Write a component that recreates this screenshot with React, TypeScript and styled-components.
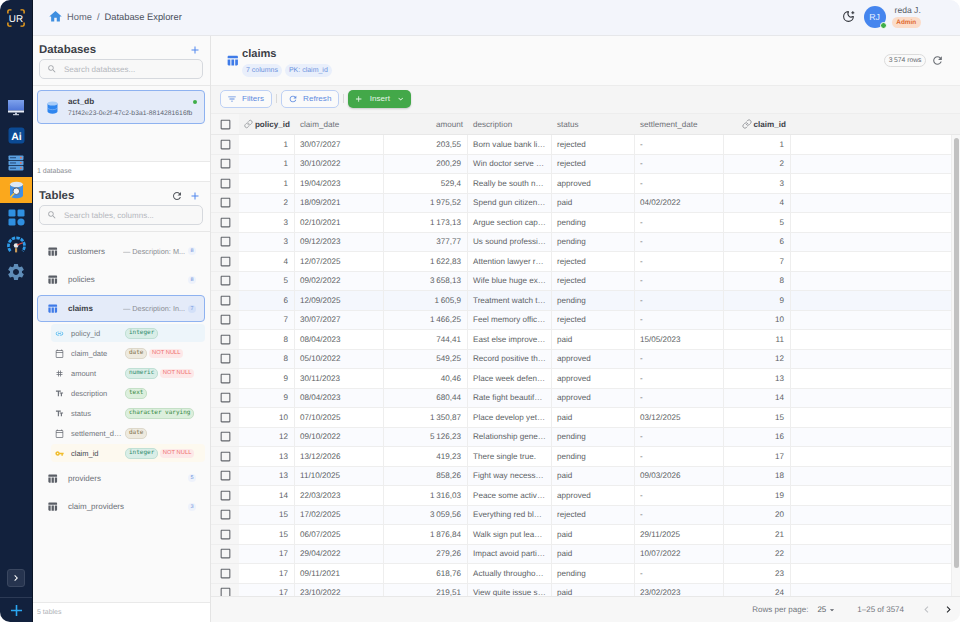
import React from "react";
import styled, { createGlobalStyle } from "styled-components";
import {
  MdHome, MdAdd, MdSearch, MdTableChart, MdRefresh, MdFilterList, MdKeyboardArrowDown,
  MdCheckBoxOutlineBlank, MdChevronLeft, MdChevronRight, MdArrowDropDown, MdLink, MdTag,
  MdTextFields, MdOutlineCalendarToday, MdVpnKey, MdSettings,
} from "react-icons/md";
import { Link as ChainIcon, MoonStar } from "lucide-react";

const Global = createGlobalStyle`
  html, body { margin: 0; padding: 0; background: #fff; }
  body { font-family: "Liberation Sans", Arial, sans-serif; text-rendering: geometricPrecision; }
  * { box-sizing: border-box; }
`;

const App_ = styled.div`
  width: 960px; height: 622px; display: flex; overflow: hidden; border-radius: 10px; background: #fafafa;
`;
const Rail = styled.nav`
  width: 33px; flex: none; background: #12213d; border-right: 1px solid #0b1526;
  display: flex; flex-direction: column; align-items: center; padding-top: 9px;
`;
const Logo = styled.div`width: 18px; height: 18px; display: flex;`;
const RailNav = styled.div`
  margin-top: 67.3px; width: 100%; display: flex; flex-direction: column; align-items: stretch;
`;
const RailItem = styled.div<{ $active?: boolean }>`
  height: ${p => (p.$active ? "25.4px" : "27.4px")}; margin: ${p => (p.$active ? "1px 0" : "0")};
  display: flex; align-items: center; justify-content: center;
  background: ${p => (p.$active ? "#fba81c" : "transparent")};
`;
const RailSpacer = styled.div`flex: 1;`;
const Expand = styled.div`
  width: 18px; height: 18px; border: 1px solid #3a4760; background: #26344f; border-radius: 3px; color: #fff;
  display: flex; align-items: center; justify-content: center; font-size: 12px; margin-bottom: 10px;
`;
const RailPlus = styled.div`
  width: 100%; height: 25px; border-top: 1px solid #2c3a55; display: flex; align-items: center; justify-content: center;
  color: #2ba7f2; font-size: 19px;
`;
const Column = styled.div`flex: 1; min-width: 0; display: flex; flex-direction: column;`;
const TopBar = styled.header`
  height: 36px; flex: none; background: #f3f5fb; border-bottom: 1px solid #e6e7ea;
  display: flex; align-items: center; padding: 0 39px 2px 15px;
`;
const Crumbs = styled.div`
  display: flex; align-items: center; font-size: 9.33px; color: #5f6673; flex: 1;
  svg { color: #3f8fe0; font-size: 15px; margin-right: 4px; }
`;
const CrumbSep = styled.span`margin: 0 5px;`;
const CrumbNow = styled.span`color: #4a505c;`;
const Moon = styled.div`color: #33363d; display: flex; margin-right: 9px;`;
const Avatar = styled.div`
  width: 22px; height: 22px; border-radius: 50%; background: #4585ee; color: #e7efff; font-size: 8.8px; position: relative;
  display: flex; align-items: center; justify-content: center; margin-right: 6px;
`;
const AvatarDot = styled.span`
  position: absolute; right: -1px; bottom: -1px; width: 7px; height: 7px; border-radius: 50%;
  background: #3fae49; border: 1px solid #fff;
`;
const UserBox = styled.div`display: flex; flex-direction: column; align-items: flex-start; gap: 2px;`;
const UserName = styled.div`font-size: 8.6px; color: #565c66; line-height: 10px; margin-left: 3px;`;
const RoleBadge = styled.div`
  font-size: 6.4px; font-weight: 700; color: #df6a30; background: #fbdcc9; border-radius: 6px; padding: 0 4.8px; line-height: 11px;
`;
const Work = styled.div`flex: 1; min-height: 0; display: flex;`;
const Side = styled.aside`
  width: 178px; flex: none; background: #fafafa; border-right: 1px solid #e4e4e4; display: flex; flex-direction: column;
`;
const DbSection = styled.section`height: 126px; flex: none; border-bottom: 1px solid #e9e9e9; display: flex; flex-direction: column;`;
const SideHead = styled.div`
  display: flex; align-items: center; gap: 6px; padding: 4px 9px 0 6px; height: 23px; flex: none;
`;
const SideTitle = styled.h2`flex: 1; margin: 0; font-size: 11.4px; font-weight: 700; color: #3c3f47;`;
const HeadIcon = styled.span<{ $blue?: boolean }>`
  display: flex; font-size: 12px; color: ${p => (p.$blue ? "#4f86ee" : "#55595f")};
`;
const Search = styled.div`
  margin: 0 7px 0 6px; height: 20px; flex: none; border: 1px solid #d6d9de; border-radius: 5px; background: #f8f8f8;
  display: flex; align-items: center; gap: 7px; padding: 0 7px; font-size: 8px; color: #b4b7bd;
  svg { font-size: 10px; color: #a3a6ab; }
`;
const Rule = styled.div`height: 1px; background: #e7e7e7; margin-top: 6px; flex: none;`;
const DbCard = styled.div`
  margin: 4px 5px 0 4px; height: 34px; background: #e4ebf9; border: 1px solid #8eb2f0; border-radius: 4px;
  display: flex; align-items: center; padding: 0 7px 0 9px; gap: 10px;
`;
const DbText = styled.div`flex: 1; min-width: 0; display: flex; flex-direction: column; gap: 4px;`;
const DbTop = styled.div`display: flex; align-items: center; justify-content: space-between;`;
const DbName = styled.span`font-size: 8.1px; font-weight: 700; color: #3c3f47;`;
const DbDot = styled.span`width: 4px; height: 4px; border-radius: 50%; background: #3fae49;`;
const DbId = styled.div`font-size: 6.7px; color: #5c6470; white-space: nowrap; letter-spacing: .01em;`;
const SideFoot = styled.div<{ $muted?: boolean }>`
  height: 20px; flex: none; background: #fff; padding: 0 4px; display: flex; align-items: center;
  font-size: 7px; color: ${p => (p.$muted ? "#b0b3b8" : "#8b8e94")}; border-bottom: 1px solid #e9e9e9;
`;
const SideFootEnd = styled(SideFoot)`border-bottom: 0; border-top: 1px solid #e9e9e9;`;
const TablesSection = styled.section`flex: 1; min-height: 0; display: flex; flex-direction: column;`;
const TableList = styled.div`flex: 1; padding: 5px 5px 0 4px; display: flex; flex-direction: column;`;
const TableRow = styled.div<{ $active?: boolean }>`
  height: ${p => (p.$active ? "27px" : "28.5px")}; flex: none; display: flex; align-items: center; padding: 0 8px 0 9px;
  border-radius: 4px; border: 1px solid ${p => (p.$active ? "#8eb2f0" : "transparent")};
  background: ${p => (p.$active ? "#e4ebf9" : "transparent")};
  svg { font-size: 11px; color: ${p => (p.$active ? "#3f7be8" : "#5a5e66")}; flex: none; }
  margin-top: ${p => (p.$active ? "1px" : "0")};
`;
const TableName = styled.span<{ $active?: boolean }>`
  margin-left: 10px; width: 55px; font-size: 8px; white-space: nowrap;
  font-weight: ${p => (p.$active ? 700 : 400)}; color: ${p => (p.$active ? "#3c3f47" : "#6a6e76")};
`;
const TableDesc = styled.span`
  flex: 1; width: 0; font-size: 7.3px; color: #8b8e94; white-space: nowrap; overflow: hidden;
`;
const Count = styled.span<{ $active?: boolean }>`
  flex: none; margin-left: auto; width: 8px; height: 8px; border-radius: 50%; font-size: 5.5px;
  color: #6c92dd; background: ${p => (p.$active ? "#d3e0f8" : "#eef2fb")};
  display: flex; align-items: center; justify-content: center;
`;
const ColumnsList = styled.div`margin: 2px 0 2px 14px; display: flex; flex-direction: column; gap: 2px;`;
const ColumnRow = styled.div<{ $tone?: string }>`
  height: 18px; flex: none; display: flex; align-items: center; border-radius: 4px; padding-left: 4px;
  background: ${p => p.$tone || "transparent"};
`;
const ColIcon = styled.span<{ $color?: string }>`
  width: 9px; display: flex; font-size: 9px; color: ${p => p.$color || "#6a6e76"}; margin-right: 7px; flex: none;
`;
const ColName = styled.span<{ $strong?: boolean }>`
  width: 54px; flex: none; padding-right: 3px; font-size: 7.5px; white-space: nowrap; overflow: hidden; text-overflow: ellipsis;
  color: ${p => (p.$strong ? "#45484f" : "#71757c")}; font-weight: 400;
`;
const TypeTag = styled.span<{ $kind: "green" | "brown" | "teal" }>`
  font-family: "DejaVu Sans Mono", "Liberation Mono", monospace; font-size: 6px; line-height: 8px; padding: 0.5px 3px; border-radius: 5px;
  border: 1px solid ${p => ({ green: "#c5e0c7", brown: "#ddd8ca", teal: "#c0e0d5" }[p.$kind])};
  background: ${p => ({ green: "#dcefdd", brown: "#eeeadf", teal: "#d9eee7" }[p.$kind])};
  color: ${p => ({ green: "#35883e", brown: "#80704c", teal: "#2f8a6b" }[p.$kind])};
`;
const NullTag = styled.span`
  margin-left: 2px; font-size: 5.8px; line-height: 9px; padding: 0 2.5px; border-radius: 4px; color: #ef6f6f; background: #fde8e8;
`;
const Main = styled.main`flex: 1; min-width: 0; background: #fafafa; display: flex; flex-direction: column;`;
const MainHead = styled.div`
  height: 50px; flex: none; display: flex; align-items: center; padding: 0 16px 0 15px; border-bottom: 1px solid #ececec;
`;
const MainIcon = styled.span`display: flex; font-size: 13px; color: #3f7be8; margin: 0 3px 0 0;`;
const TitleBox = styled.div`flex: 1; display: flex; flex-direction: column; gap: 3px; margin-top: 3px;`;
const MainTitle = styled.h1`margin: 0; font-size: 11.1px; line-height: 14px; font-weight: 700; color: #3c3f47;`;
const Chips = styled.div`display: flex; gap: 3px;`;
const Chip = styled.span`
  font-size: 7px; line-height: 13.5px; padding: 0 4px; border-radius: 7px; background: #e9effb; color: #6c92dd;
`;
const RowsPill = styled.span`
  font-size: 6.8px; line-height: 11px; padding: 0 3.5px; border: 1px solid #dcdcdc; border-radius: 7px; color: #676b72; margin-right: 5px;
`;
const HeadRefresh = styled.span`display: flex; font-size: 13px; color: #6a6e74;`;
const Toolbar = styled.div`
  height: 28px; flex: none; display: flex; align-items: center; gap: 4px; padding: 0 0 2px 9px; background: #f5f5f5; border-bottom: 1px solid #ededed;
`;
const OutlineButton = styled.button`
  height: 18px; border: 1px solid #bdd0f4; border-radius: 5px; background: #fafafa; color: #5e8be0; font: 400 8.1px "Liberation Sans", sans-serif;
  padding: 0 7px 0 6px; display: flex; align-items: center; gap: 5px;
  svg { font-size: 10px; }
`;
const Sep = styled.span`width: 1px; height: 9px; background: #d9d9d9;`;
const InsertButton = styled.button`
  height: 18px; width: 63px; border: 0; border-radius: 5px; background: #43a849; color: #e8f6e9; font: 400 8.1px "Liberation Sans", sans-serif;
  display: flex; align-items: center; justify-content: center; gap: 6px; box-shadow: 0 1px 2px rgba(0,0,0,.18);
  svg { font-size: 10px; }
`;
const grid = "28px 56px 89px 84px 84px 83px 89px 67px 1fr";
const HeadRow = styled.div`
  height: 21px; flex: none; display: grid; grid-template-columns: ${grid}; background: #f3f3f3; border-bottom: 1px solid #e8e8e8;
`;
const Th = styled.div<{ $right?: boolean; $strong?: boolean }>`
  display: flex; align-items: center; justify-content: ${p => (p.$right ? "flex-end" : "flex-start")}; gap: 2px; padding: 0 5px 0 5px;
  font-size: 8.1px; white-space: nowrap; color: ${p => (p.$strong ? "#3c3f47" : "#6d7077")}; font-weight: ${p => (p.$strong ? 700 : 400)};
  svg { color: #8a8d92; }
`;
const CheckCell = styled.div`
  display: flex; align-items: center; justify-content: center; color: #62656b; font-size: 13px; background: #f6f6f6;
`;
const BodyWrap = styled.div`flex: 1; min-height: 0; display: flex; overflow: hidden;`;
const Rows = styled.div`flex: 1; min-width: 0;`;
const Row = styled.div<{ $alt?: boolean; $hover?: boolean }>`
  height: 19.5px; display: grid; grid-template-columns: ${grid}; border-bottom: 1px solid #eeeeee;
  background: ${p => (p.$hover ? "#f4f7fd" : p.$alt ? "#fafbfe" : "#fff")};
`;
const Td = styled.div<{ $right?: boolean }>`
  display: flex; align-items: center; justify-content: ${p => (p.$right ? "flex-end" : "flex-start")}; padding: 0 6px 0 5px; font-size: 8.1px;
  color: #5c5f65; white-space: nowrap; overflow: hidden; border-right: 1px solid #eeeeee;
`;
const TrackBar = styled.div`width: 8px; flex: none; padding: 3px 1px 0 2px; background: #f7f7f7;`;
const Thumb = styled.div`height: 430px; background: #c1c1c1; border-radius: 3px;`;
const Pager = styled.footer`
  height: 26px; flex: none; display: flex; align-items: center; justify-content: flex-end; padding: 0 5.5px 0 0;
  background: #f7f7f7; border-top: 1px solid #e8e8e8; font-size: 8px; color: #71757c;
`;
const PerPage = styled.span`margin-left: 9px; display: flex; align-items: center; gap: 1px; color: #5a5e66; svg { font-size: 10px; }`;
const Range = styled.span`margin-left: 20px; margin-right: 6.5px;`;
const PageBtn = styled.span<{ $off?: boolean }>`
  display: flex; font-size: 13px; margin-left: 9px; color: ${p => (p.$off ? "#c0c2c6" : "#26282c")};
`;

const Monitor = () => (
  <svg width="18" height="17" viewBox="0 0 18 17">
    <defs><linearGradient id="mon" x1="0" y1="0" x2="0" y2="1"><stop offset="0" stopColor="#7ea2ec"/><stop offset="1" stopColor="#4f76d8"/></linearGradient></defs>
    <rect x="1" y="1" width="16" height="10.5" fill="url(#mon)"/>
    <rect x="1" y="11.5" width="16" height="2" fill="#e8edf6"/>
    <rect x="8" y="13.5" width="2" height="2" fill="#b9c4da"/>
    <rect x="6" y="15.2" width="6" height="1" fill="#dfe5ef"/>
  </svg>
);
const AiIcon = () => (
  <svg width="17" height="17" viewBox="0 0 17 17">
    <rect x="0.5" y="0.5" width="16" height="16" rx="3" fill="#0b4a94"/>
    <text x="8.5" y="12.5" fontFamily="Liberation Sans, sans-serif" fontSize="10.5" fontWeight="700" fill="#fff" textAnchor="middle">Ai</text>
  </svg>
);
const ServerIcon = () => (
  <svg width="16" height="16" viewBox="0 0 16 16">
    {[0.5, 5.7, 10.9].map(y => (
      <g key={y}>
        <rect x="0.5" y={y} width="15" height="4.5" rx="0.8" fill="#5a9fe0"/>
        <rect x="2" y={y + 1.8} width="6" height="0.9" fill="#1d3f6e"/>
        <circle cx="12.8" cy={y + 2.2} r="0.9" fill="#ef6a4a"/>
      </g>
    ))}
  </svg>
);
const DbSearchIcon = () => (
  <svg width="17" height="19" viewBox="0 0 17 19">
    <ellipse cx="8.5" cy="3.6" rx="6.5" ry="2.8" fill="#dbe8f6"/>
    <path d="M2 3.6V14.5C2 16 5 17.3 8.5 17.3S15 16 15 14.5V3.6C15 5 12 6.4 8.5 6.4S2 5 2 3.6Z" fill="#3f8fe6"/>
    <circle cx="8.3" cy="10.2" r="3.3" fill="#eef3f8" stroke="#5a6270" strokeWidth="1"/>
    <path d="M5.8 12.8L3 15.6" stroke="#f5c542" strokeWidth="1.6" strokeLinecap="round"/>
  </svg>
);
const GridIcon = () => (
  <svg width="17" height="17" viewBox="0 0 17 17" fill="#2f8fe0">
    <rect x="0.5" y="0.5" width="7" height="7" rx="1.3"/>
    <rect x="9.5" y="0.5" width="7" height="7" rx="1.3"/>
    <rect x="0.5" y="9.5" width="7" height="7" rx="1.3"/>
    <circle cx="13" cy="13" r="3.6"/>
  </svg>
);
const GaugeIcon = () => (
  <svg width="19" height="18" viewBox="0 0 18 17" fill="none">
    <path d="M3.2 14.2A7.6 7.6 0 1 1 14.8 14.2" stroke="#2f9be8" strokeWidth="2.6" strokeDasharray="3.2 1"/>
    <circle cx="8.6" cy="9" r="2.2" fill="#e6e8ea"/>
    <path d="M9.5 8.6L15 6.4" stroke="#e4493e" strokeWidth="1"/>
    <rect x="7.6" y="11.5" width="2" height="4" fill="#c99a58"/>
  </svg>
);
const DbIcon = () => (
  <svg width="11" height="13" viewBox="0 0 11 13">
    <path d="M0.5 2.5V10.5C0.5 11.7 2.7 12.7 5.5 12.7S10.5 11.7 10.5 10.5V2.5Z" fill="#2f86ef"/>
    <path d="M0.5 6.5C0.5 7.7 2.7 8.7 5.5 8.7S10.5 7.7 10.5 6.5" stroke="#a8cbf6" strokeWidth="0.5" fill="none"/>
    <ellipse cx="5.5" cy="2.5" rx="5" ry="2.1" fill="#a9cdf8"/>
  </svg>
);
const LogoMark = () => (
  <svg width="18" height="18" viewBox="0 0 20 20" fill="none">
    <g stroke="#f2a21b" strokeWidth="1.6">
      <path d="M5 1H2.5A1.5 1.5 0 0 0 1 2.5V5"/>
      <path d="M15 1H17.5A1.5 1.5 0 0 1 19 2.5V5"/>
      <path d="M5 19H2.5A1.5 1.5 0 0 1 1 17.5V15"/>
      <path d="M15 19H17.5A1.5 1.5 0 0 0 19 17.5V15"/>
    </g>
    <text x="10" y="14" fontFamily="Liberation Sans, sans-serif" fontSize="11" fontWeight="400" fill="#fff" textAnchor="middle">UR</text>
  </svg>
);

const nb = "\u202f";
const data: [number, string, string, string, string, string, number][] = [
  [1, "30/07/2027", "203,55", "Born value bank li…", "rejected", "-", 1],
  [1, "30/10/2022", "200,29", "Win doctor serve …", "rejected", "-", 2],
  [1, "19/04/2023", "529,4", "Really be south n…", "approved", "-", 3],
  [2, "18/09/2021", `1${nb}975,52`, "Spend gun citizen…", "paid", "04/02/2022", 4],
  [3, "02/10/2021", `1${nb}173,13`, "Argue section cap…", "pending", "-", 5],
  [3, "09/12/2023", "377,77", "Us sound professi…", "pending", "-", 6],
  [4, "12/07/2025", `1${nb}622,83`, "Attention lawyer r…", "rejected", "-", 7],
  [5, "09/02/2022", `3${nb}658,13`, "Wife blue huge ex…", "rejected", "-", 8],
  [6, "12/09/2025", `1${nb}605,9`, "Treatment watch t…", "pending", "-", 9],
  [7, "30/07/2027", `1${nb}466,25`, "Feel memory offic…", "rejected", "-", 10],
  [8, "08/04/2023", "744,41", "East else improve…", "paid", "15/05/2023", 11],
  [8, "05/10/2022", "549,25", "Record positive th…", "approved", "-", 12],
  [9, "30/11/2023", "40,46", "Place week defen…", "approved", "-", 13],
  [9, "08/04/2023", "680,44", "Rate fight beautif…", "approved", "-", 14],
  [10, "07/10/2025", `1${nb}350,87`, "Place develop yet…", "paid", "03/12/2025", 15],
  [12, "09/10/2022", `5${nb}126,23`, "Relationship gene…", "pending", "-", 16],
  [13, "13/12/2026", "419,23", "There single true.", "pending", "-", 17],
  [13, "11/10/2025", "858,26", "Fight way necess…", "paid", "09/03/2026", 18],
  [14, "22/03/2023", `1${nb}316,03`, "Peace some activ…", "approved", "-", 19],
  [15, "17/02/2025", `3${nb}059,56`, "Everything red bl…", "rejected", "-", 20],
  [15, "06/07/2025", `1${nb}876,84`, "Walk sign put lea…", "paid", "29/11/2025", 21],
  [17, "29/04/2022", "279,26", "Impact avoid parti…", "paid", "10/07/2022", 22],
  [17, "09/11/2021", "618,76", "Actually througho…", "pending", "-", 23],
  [17, "23/10/2022", "219,51", "View quite issue s…", "paid", "23/02/2023", 24],
];

type ColDef = { name: string; icon: React.ReactNode; iconColor?: string; type: string; kind: "green" | "brown" | "teal"; notNull?: boolean; tone?: string; strong?: boolean };
const cols: ColDef[] = [
  { name: "policy_id", icon: <MdLink />, iconColor: "#45b4ee", type: "integer", kind: "teal", tone: "#edf5fa" },
  { name: "claim_date", icon: <MdOutlineCalendarToday />, type: "date", kind: "brown", notNull: true },
  { name: "amount", icon: <MdTag />, type: "numeric", kind: "teal", notNull: true },
  { name: "description", icon: <MdTextFields />, type: "text", kind: "green" },
  { name: "status", icon: <MdTextFields />, type: "character varying", kind: "green" },
  { name: "settlement_date", icon: <MdOutlineCalendarToday />, type: "date", kind: "brown" },
  { name: "claim_id", icon: <MdVpnKey />, iconColor: "#f0bd2e", type: "integer", kind: "teal", notNull: true, tone: "#fdf9ef", strong: true },
];

export default function App() {
  return (
    <App_>
      <Global />
      <Rail>
        <Logo><LogoMark /></Logo>
        <RailNav>
          <RailItem><Monitor /></RailItem>
          <RailItem><AiIcon /></RailItem>
          <RailItem><ServerIcon /></RailItem>
          <RailItem $active><DbSearchIcon /></RailItem>
          <RailItem><GridIcon /></RailItem>
          <RailItem><GaugeIcon /></RailItem>
          <RailItem><MdSettings size={20} color="#5f8db8" /></RailItem>
        </RailNav>
        <RailSpacer />
        <Expand><MdChevronRight /></Expand>
        <RailPlus><MdAdd /></RailPlus>
      </Rail>
      <Column>
        <TopBar>
          <Crumbs>
            <MdHome />
            <span>Home</span><CrumbSep>/</CrumbSep><CrumbNow>Database Explorer</CrumbNow>
          </Crumbs>
          <Moon><MoonStar size={13} /></Moon>
          <Avatar>RJ<AvatarDot /></Avatar>
          <UserBox>
            <UserName>reda J.</UserName>
            <RoleBadge>Admin</RoleBadge>
          </UserBox>
        </TopBar>
        <Work>
          <Side>
            <DbSection>
              <SideHead>
                <SideTitle>Databases</SideTitle>
                <HeadIcon $blue><MdAdd /></HeadIcon>
              </SideHead>
              <Search><MdSearch />Search databases...</Search>
              <Rule />
              <DbCard>
                <DbIcon />
                <DbText>
                  <DbTop><DbName>act_db</DbName><DbDot /></DbTop>
                  <DbId>71f42e23-0e2f-47c2-b3a1-8814281616fb</DbId>
                </DbText>
              </DbCard>
            </DbSection>
            <SideFoot>1 database</SideFoot>
            <TablesSection>
              <SideHead>
                <SideTitle>Tables</SideTitle>
                <HeadIcon><MdRefresh /></HeadIcon>
                <HeadIcon $blue><MdAdd /></HeadIcon>
              </SideHead>
              <Search><MdSearch />Search tables, columns...</Search>
              <Rule />
              <TableList>
                <TableRow><MdTableChart /><TableName>customers</TableName><TableDesc>— Description: M...</TableDesc><Count>8</Count></TableRow>
                <TableRow><MdTableChart /><TableName>policies</TableName><Count>8</Count></TableRow>
                <TableRow $active><MdTableChart /><TableName $active>claims</TableName><TableDesc>— Description: In...</TableDesc><Count $active>7</Count></TableRow>
                <ColumnsList>
                  {cols.map(c => (
                    <ColumnRow key={c.name} $tone={c.tone}>
                      <ColIcon $color={c.iconColor}>{c.icon}</ColIcon>
                      <ColName $strong={c.strong}>{c.name}</ColName>
                      <TypeTag $kind={c.kind}>{c.type}</TypeTag>
                      {c.notNull && <NullTag>NOT NULL</NullTag>}
                    </ColumnRow>
                  ))}
                </ColumnsList>
                <TableRow><MdTableChart /><TableName>providers</TableName><Count>5</Count></TableRow>
                <TableRow><MdTableChart /><TableName>claim_providers</TableName><Count>3</Count></TableRow>
              </TableList>
              <SideFootEnd $muted>5 tables</SideFootEnd>
            </TablesSection>
          </Side>
          <Main>
            <MainHead>
              <MainIcon><MdTableChart /></MainIcon>
              <TitleBox>
                <MainTitle>claims</MainTitle>
                <Chips><Chip>7 columns</Chip><Chip>PK: claim_id</Chip></Chips>
              </TitleBox>
              <RowsPill>3{nb}574 rows</RowsPill>
              <HeadRefresh><MdRefresh /></HeadRefresh>
            </MainHead>
            <Toolbar>
              <OutlineButton><MdFilterList />Filters</OutlineButton>
              <Sep />
              <OutlineButton><MdRefresh />Refresh</OutlineButton>
              <Sep />
              <InsertButton><MdAdd />Insert<MdKeyboardArrowDown /></InsertButton>
            </Toolbar>
            <HeadRow>
              <CheckCell><MdCheckBoxOutlineBlank /></CheckCell>
              <Th $strong $right><ChainIcon size={10} />policy_id</Th>
              <Th>claim_date</Th>
              <Th $right>amount</Th>
              <Th>description</Th>
              <Th>status</Th>
              <Th>settlement_date</Th>
              <Th $strong $right><ChainIcon size={10} />claim_id</Th>
              <Th />
            </HeadRow>
            <BodyWrap>
              <Rows>
                {data.map((r, i) => (
                  <Row key={i} $alt={i % 2 === 1} $hover={i === 8}>
                    <CheckCell><MdCheckBoxOutlineBlank /></CheckCell>
                    <Td $right>{r[0]}</Td>
                    <Td>{r[1]}</Td>
                    <Td $right>{r[2]}</Td>
                    <Td>{r[3]}</Td>
                    <Td>{r[4]}</Td>
                    <Td>{r[5]}</Td>
                    <Td $right>{r[6]}</Td>
                    <Td />
                  </Row>
                ))}
              </Rows>
              <TrackBar><Thumb /></TrackBar>
            </BodyWrap>
            <Pager>
              <span>Rows per page:</span>
              <PerPage>25<MdArrowDropDown /></PerPage>
              <Range>1–25 of 3574</Range>
              <PageBtn $off><MdChevronLeft /></PageBtn>
              <PageBtn><MdChevronRight /></PageBtn>
            </Pager>
          </Main>
        </Work>
      </Column>
    </App_>
  );
}
